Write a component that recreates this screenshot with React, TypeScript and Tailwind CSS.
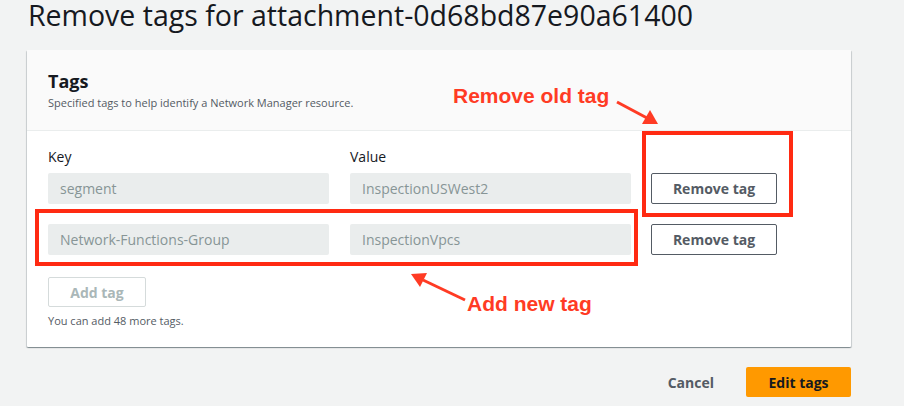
import React from "react";

const F = { fontFamily: '"Open Sans", "Noto Sans", sans-serif' };
const A = { fontFamily: '"Liberation Sans", Arial, sans-serif' };

function Input({ value }: { value: string }) {
  return (
    <div className="h-[31px] w-[281px] bg-[#eaeded] rounded-[2px] pl-[12px] flex items-center text-[14px] text-[#879596]">
      {value}
    </div>
  );
}

function RemoveBtn() {
  return (
    <button className="h-[31px] w-[126px] border border-[#545b64] rounded-[2px] bg-white text-[14px] font-bold text-[#545b64] flex items-center justify-center">
      Remove tag
    </button>
  );
}

export default function App() {
  const rows = [
    ["segment", "InspectionUSWest2"],
    ["Network-Functions-Group", "InspectionVpcs"],
  ];
  return (
    <div className="relative w-[904px] h-[406px] bg-[#f2f3f3] overflow-hidden" style={F}>
      <div className="pl-[28px] pt-[1px]">
        <h1 className="text-[28.5px] leading-[28px] text-[#16191f] font-normal">
          Remove tags for attachment-0d68bd87e90a61400
        </h1>
      </div>
      <div className="ml-[27px] mt-[21px] w-[824px] bg-white rounded-[1px] shadow-[0_1px_1px_0_rgba(0,28,36,0.3),1px_1px_1px_0_rgba(0,28,36,0.15),-1px_1px_1px_0_rgba(0,28,36,0.15)]">
        <div className="h-[81px] bg-[#fafafa] border-b border-[#eaeded] pt-[20px] px-[21px]">
          <div className="text-[18px] leading-[22px] font-bold text-[#16191f]">Tags</div>
          <div className="mt-[4px] text-[11px] leading-[14px] text-[#545b64]">
            Specified tags to help identify a Network Manager resource.
          </div>
        </div>
        <div className="px-[21px] pt-[16px] pb-[18px]">
          <div className="flex gap-[21px] text-[14px] leading-[20px] text-[#16191f] mb-[6px]">
            <div className="w-[281px]">Key</div>
            <div className="w-[281px]">Value</div>
          </div>
          <div className="flex flex-col gap-[20px]">
            {rows.map(([k, v]) => (
              <div key={k} className="flex items-center">
                <Input value={k} />
                <div className="w-[21px]" />
                <Input value={v} />
                <div className="w-[20px]" />
                <RemoveBtn />
              </div>
            ))}
          </div>
          <button className="mt-[22px] h-[30px] w-[98px] border border-[#d5dbdb] rounded-[2px] bg-white text-[14px] font-bold text-[#aab7b8] flex items-center justify-center">
            Add tag
          </button>
          <div className="mt-[6px] text-[11px] leading-[16px] text-[#545b64]">
            You can add 48 more tags.
          </div>
        </div>
      </div>
      <div className="w-[851px] flex justify-end items-center mt-[20px]">
        <button className="mr-[32px] text-[14px] font-bold text-[#545b64]">Cancel</button>
        <button className="h-[30px] w-[105px] bg-[#ff9900] rounded-[2px] text-[14px] font-bold text-[#16191f] flex items-center justify-center">
          Edit tags
        </button>
      </div>

      {/* annotations */}
      <div className="absolute left-[642px] top-[131px] w-[151px] h-[86px] border-[4px] border-[#ff2a12] pointer-events-none" />
      <div className="absolute left-[35px] top-[209px] w-[603px] h-[57px] border-[4px] border-[#ff2a12] pointer-events-none" />
      <div className="absolute left-[453px] top-[84px] text-[21px] leading-[24px] font-bold text-[#ff3b24]" style={A}>
        Remove old tag
      </div>
      <div className="absolute left-[467px] top-[292px] text-[21px] leading-[24px] font-bold text-[#ff3b24]" style={A}>
        Add new tag
      </div>
      <svg className="absolute left-0 top-0 pointer-events-none" width="904" height="406" viewBox="0 0 904 406">
        <line x1="617" y1="102" x2="647" y2="118" stroke="#ff3b24" strokeWidth="3" />
        <polygon points="658,124 642,124 650,110" fill="#ff3b24" />
        <line x1="465" y1="300" x2="423" y2="280" stroke="#ff3b24" strokeWidth="3" />
        <polygon points="411,274 420,287 427,273" fill="#ff3b24" />
      </svg>
    </div>
  );
}
